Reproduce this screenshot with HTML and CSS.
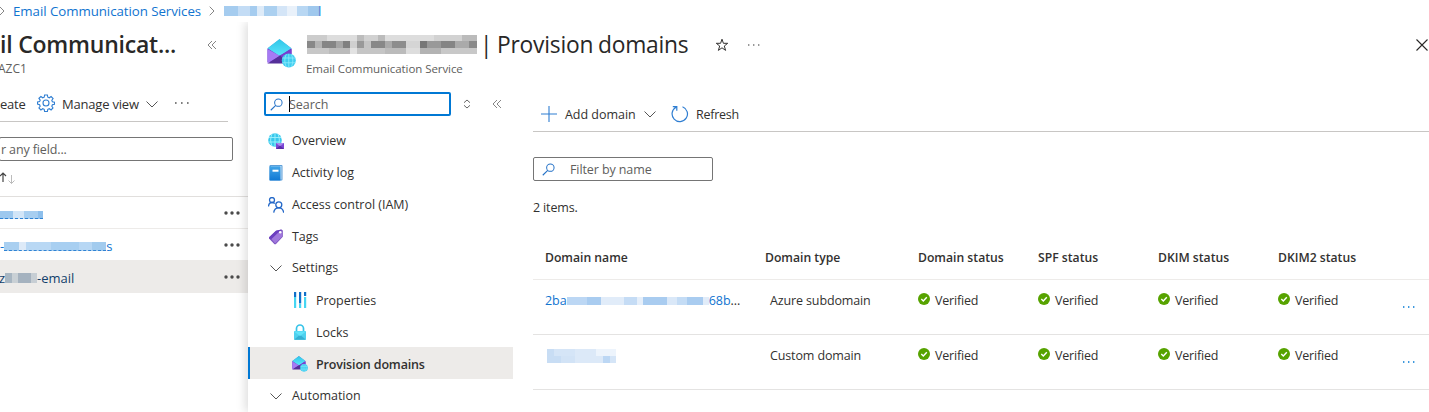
FILE: index.html
```html
<!DOCTYPE html>
<html lang="en">
<head>
<meta charset="utf-8">
<title>Provision domains</title>
<link rel="stylesheet" href="styles.css">
</head>
<body>
<svg class="defs" width="0" height="0">
  <defs>
    <linearGradient id="gc" x1="0" y1="0" x2="0" y2="1"><stop offset="0" stop-color="#2fc6e8"/><stop offset="1" stop-color="#5ce4fb"/></linearGradient>
    <linearGradient id="gb" x1="0" y1="0" x2="0" y2="1"><stop offset="0" stop-color="#42a5e8"/><stop offset="1" stop-color="#0f78d4"/></linearGradient>
    <symbol id="mail" viewBox="1 1 29 29">
      <path d="M1.500 10.500 13.500 1.500 25.500 10.500v13.500h-24z" fill="#6b36c4"/>
      <path d="M13.500 1 25.500 10.200 13.500 18 1.500 10.200z" fill="url(#gc)"/>
      <path d="M1.500 11 14 18 1.500 25.500z" fill="#a67af4"/>
      <path d="M25.500 11 13 18l12.500 6z" fill="#7a3fd0"/>
      <path d="M1.500 25.500l12.500-8 9 8z" fill="#552f99"/>
      <circle cx="22.800" cy="22.500" r="7" fill="#3fcdf0"/>
      <path d="M16.300 20h13M16.300 24.800h13M22.800 16v13M20.300 16.300c-2 4-2 8.500 0 12.500M25.300 16.300c2 4 2 8.500 0 12.500" fill="none" stroke="#91ecfd" stroke-width=".8"/>
    </symbol>
    <symbol id="chev" viewBox="0 0 12 8"><path d="M.5 1.500 6 7l5.500-5.500" fill="none" stroke="currentColor" stroke-width="1"/></symbol>
    <symbol id="collapse" viewBox="0 0 10 10"><path d="M5 1 1 5l4 4M9 1 5 5l4 4" fill="none" stroke="currentColor" stroke-width=".8"/></symbol>
    <symbol id="lens" viewBox="0 0 14 14"><circle cx="9" cy="5" r="4" fill="none" stroke="currentColor" stroke-width="1.100"/><path d="M6.200 7.900.8 13.200" stroke="currentColor" stroke-width="1.200"/></symbol>
    <symbol id="ok" viewBox="0 0 12 12"><circle cx="6" cy="6" r="6" fill="#57a300"/><path d="M3.300 6.100 5.300 8l3.500-3.800" fill="none" stroke="#fff" stroke-width="1.400"/></symbol>
    <symbol id="dots" viewBox="0 0 16 4"><circle cx="2" cy="2" r="1.700" fill="currentColor"/><circle cx="8" cy="2" r="1.700" fill="currentColor"/><circle cx="14" cy="2" r="1.700" fill="currentColor"/></symbol>
    <symbol id="smalldots" viewBox="0 0 14 2"><path d="M1 .3h1.400v1.400H1zM6 .3h1.400v1.400H6zM11 .3h1.400v1.400H11z" fill="currentColor"/></symbol>
  </defs>
</svg>
<nav class="crumbs">
  <svg class="crumb-sep first" viewBox="0 0 6 10"><path d="M.7.7 5 5 .7 9.300"/></svg>
  <a>Email Communication Services</a>
  <svg class="crumb-sep" viewBox="0 0 6 10"><path d="M.7.7 5 5 .7 9.300"/></svg>
  <span class="mosaic m-crumb"></span><a class="crumb-tail">l</a>
</nav>
<div class="main">
  <aside class="list">
    <div class="list-head"><h2>il Communicat...</h2><svg class="collapse"><use href="#collapse"/></svg></div>
    <div class="tenant">AZC1</div>
    <div class="list-bar">
      <span class="create">eate</span>
      <svg class="gear" viewBox="0 0 18 18"><path d="M7.600 1h2.800l.4 2.200 1.500.6L14.100 2.500l2 2-1.300 1.800.6 1.500 2.100.4v2l-2.100.5-.6 1.500 1.200 1.800-1.900 2-1.800-1.300-1.500.6-.4 2.200H7.600l-.4-2.200-1.500-.6-1.800 1.300-2-2 1.300-1.800-.6-1.500L.5 10V8l2.100-.4.6-1.500-1.300-1.700 2-1.900 1.800 1.300 1.500-.6z"/><circle cx="9" cy="9" r="3"/></svg>
      <span class="manage">Manage view</span>
      <svg class="chev"><use href="#chev"/></svg>
      <svg class="bar-dots" viewBox="0 0 16 2"><path d="M1 .2h1.600v1.600H1zM7 .2h1.600v1.600H7zM13 .2h1.600v1.600H13z"/></svg>
    </div>
    <div class="any-field">r any field...</div>
    <div class="sorts"><svg viewBox="0 0 16 14"><path class="up" d="M3 11V2M0 5l3-3 3 3"/><path class="down" d="M11.500 4v8.500M8.500 9.500l3 3 3-3"/></svg></div>
    <div class="res"><span class="mosaic m-one"></span><svg class="dots"><use href="#dots"/></svg></div>
    <div class="res"><a>-</a><span class="mosaic m-two"></span><a>s</a><svg class="dots"><use href="#dots"/></svg></div>
    <div class="res current"><a class="z">z</a><span class="mosaic m-three"></span><a>-email</a><svg class="dots"><use href="#dots"/></svg></div>
  </aside>
  <section class="blade">
    <header class="head">
      <svg class="logo"><use href="#mail"/></svg>
      <div class="titles">
        <div class="title"><span class="mosaic m-title"></span><h1>| Provision domains</h1></div>
        <div class="kind">Email Communication Service</div>
      </div>
      <svg class="star" viewBox="0 0 14 14"><path d="M7 1.200 8.400 5.300h4.300L9.300 8l1.300 4.400L7 9.800l-3.600 2.600L4.700 8 1.300 5.300h4.300z"/></svg>
      <svg class="head-dots"><use href="#smalldots"/></svg>
      <svg class="close" viewBox="0 0 12 12"><path d="M.5.5l11 11M11.500.5.500 11.500"/></svg>
    </header>
    <div class="body">
      <nav class="menu">
        <div class="search-row">
          <div class="search"><svg class="lens"><use href="#lens"/></svg><i class="caret"></i><span>Search</span></div>
          <svg class="updown" viewBox="0 0 8 10"><path d="M1 3.700 4 1l3 2.700M1 6.300 4 9l3-2.700"/></svg>
          <svg class="collapse"><use href="#collapse"/></svg>
        </div>
        <div class="item"><svg class="ic" viewBox="0 0 16 16"><circle cx="7" cy="7" r="6.800" fill="#38c8ec"/><path d="M1 4.500h12M.5 9h12M7 .3v13M4 1c-1.800 4-1.800 8 0 12M10 1c1.800 4 1.800 8 0 12" fill="none" stroke="#a0f0fd" stroke-width=".9"/><path d="M8 10h8v6H8z" fill="#7b46d6"/><path d="M8 10h8l-4 3.500z" fill="#a88aec"/><path d="M8 16l4-3.500 4 3.500z" fill="#5b2ea6"/></svg><span>Overview</span></div>
        <div class="item"><svg class="ic" viewBox="0 0 16 16"><rect x="1.500" y="0" width="13" height="15.500" rx="1" fill="#5c9ed8"/><rect x="3" y="1" width="10.500" height="13.500" fill="#c8e2f6"/><rect x="1.500" y="1.200" width="11" height="14.300" rx=".6" fill="url(#gb)"/><rect x="4.500" y="4.700" width="6" height="2" fill="#fff"/></svg><span>Activity log</span></div>
        <div class="item"><svg class="ic people" viewBox="0 0 16 16"><circle cx="4" cy="3" r="2.500"/><path d="M.5 9.500c.2-2.700 1.500-4 3.500-4 1.300 0 2.200.4 2.800 1"/><circle cx="10.800" cy="7.800" r="3"/><path d="M5.700 15.700c.4-3.200 2.300-4.900 5.100-4.900s4.500 1.700 4.900 4.900"/></svg><span>Access control (IAM)</span></div>
        <div class="item"><svg class="ic" viewBox="0 0 16 16"><path d="M8 1.800 13.500.6l1.300 1v6.200L7.800 15.200H6.500L1 9.500V8.300z" fill="#7d55c2"/><path d="M8.500 3 14 2l.2 5.500-7 7L2.500 9z" fill="#a078dc"/><path d="M8 1.800 13.500.6 3 10.500 1 8.500z" fill="#6c3fc0"/><circle cx="12.200" cy="3.300" r="1.200" fill="#fff"/></svg><span>Tags</span></div>
        <div class="item group"><svg class="chev"><use href="#chev"/></svg><span>Settings</span></div>
        <div class="item sub"><svg class="ic" viewBox="0 0 16 16"><path d="M2 0h2.200v5H2zM7 0h2.200v11.500H7zM12 0h2.200v4H12z" fill="#0f6fc9"/><path d="M2 5h2.200v11H2zM7 12h2.200v4H7zM12 5h2.200v11H12z" fill="#45d6f2"/></svg><span>Properties</span></div>
        <div class="item sub"><svg class="ic" viewBox="0 0 16 16"><path d="M4.500 8V4.500a3.500 3.500 0 0 1 7 0V8" fill="none" stroke="#36c3e8" stroke-width="1.700"/><rect x="2" y="7" width="12" height="8.800" rx=".8" fill="#4fd0ee"/><path d="M2 15.800l6-5 6 5z" fill="#35afd2"/><path d="M2 7.500 8 12l6-4.500z" fill="#62e4fa"/></svg><span>Locks</span></div>
        <div class="item sub selected"><svg class="ic"><use href="#mail"/></svg><span>Provision domains</span></div>
        <div class="item last"><svg class="chev"><use href="#chev"/></svg><span>Automation</span></div>
      </nav>
      <main class="content">
        <div class="commands">
          <svg class="plus" viewBox="0 0 16 16"><path d="M8 0v16M0 8h16"/></svg>
          <span class="add">Add domain</span>
          <svg class="chev"><use href="#chev"/></svg>
          <svg class="refresh" viewBox="0 0 18 18"><path d="M11.500 1.700A7.700 7.700 0 1 1 5 2.200M1.800 1.700h4v4"/></svg>
          <span class="ref">Refresh</span>
        </div>
        <div class="filter"><svg class="lens"><use href="#lens"/></svg><span>Filter by name</span></div>
        <div class="count">2 items.</div>
        <div class="row th"><span>Domain name</span><span>Domain type</span><span>Domain status</span><span>SPF status</span><span>DKIM status</span><span>DKIM2 status</span></div>
        <div class="row">
          <span class="name"><a>2ba</a><i class="mosaic m-dom"></i><a>68b</a>...</span><span class="type">Azure subdomain</span>
          <span class="st"><svg><use href="#ok"/></svg><b>Verified</b></span><span class="st"><svg><use href="#ok"/></svg><b>Verified</b></span><span class="st"><svg><use href="#ok"/></svg><b>Verified</b></span><span class="st"><svg><use href="#ok"/></svg><b>Verified</b></span>
          <svg class="row-dots"><use href="#smalldots"/></svg>
        </div>
        <div class="row">
          <span class="name"><i class="mosaic m-custom"></i></span><span class="type">Custom domain</span>
          <span class="st"><svg><use href="#ok"/></svg><b>Verified</b></span><span class="st"><svg><use href="#ok"/></svg><b>Verified</b></span><span class="st"><svg><use href="#ok"/></svg><b>Verified</b></span><span class="st"><svg><use href="#ok"/></svg><b>Verified</b></span>
          <svg class="row-dots"><use href="#smalldots"/></svg>
        </div>
      </main>
    </div>
  </section>
</div>
</body>
</html>
```
FILE: styles.css
```css
* { box-sizing: border-box; }
body { margin: 0; width: 1429px; height: 412px; overflow: hidden; background: #fff; color: #323130; font: 12.5px/16px "Open Sans", "Noto Sans", sans-serif; letter-spacing: -.03px; display: flex; flex-direction: column; }
.defs { position: absolute; }
svg { flex: none; display: block; }
h1, h2 { margin: 0; white-space: nowrap; color: #292827; }
span, a { white-space: nowrap; }
a { color: #1074d0; }
.chev { width: 12px; height: 8px; color: #555; }
.collapse { width: 10px; height: 10px; color: #666; }
.mosaic { display: block; flex: none; background-repeat: no-repeat; }

.crumbs { height: 22px; flex: none; display: flex; align-items: center; font-size: 13.3px; letter-spacing: -.06px; }
.crumb-sep { width: 6px; height: 10px; margin: 0 8px 0 8px; fill: none; stroke: #777; stroke-width: .9; }
.crumb-sep.first { margin: 0 8px 0 -1px; }
.crumb-tail { margin-left: -1px; }
.m-crumb { width: 95px; height: 10px; margin-left: 1px; background: linear-gradient(90deg, #a5ccef 0 14px, #c3dcf5 14px 26px, #a5ccef 26px 33px, #deebf8 33px 40px, #abd0f0 40px 53px, #d4e5f7 53px 63px, #e9f1fa 63px 73px, #b8d7f3 73px 84px, #9fc8ed 84px); }

.main { flex: 1; display: flex; }
.list { width: 248px; flex: none; display: flex; flex-direction: column; }
.list-head { height: 45px; display: flex; align-items: center; justify-content: space-between; padding-right: 31px; }
.list-head h2 { font-size: 23px; font-weight: 600; line-height: 30px; letter-spacing: -.22px; margin-top: -1px; }
.tenant { margin: -6px 0 0 -2px; height: 16px; font-size: 12px; color: #605e5c; }
.list-bar { height: 45px; width: 228px; border-bottom: 1px solid #c8c6c4; display: flex; align-items: center; padding-top: 10px; }
.create { width: 37px; font-size: 13px; letter-spacing: -.2px; }
.gear { width: 18px; height: 18px; margin-top: -2px; fill: none; stroke: #2f7ed2; stroke-width: 1.1; }
.manage { margin-left: 7px; width: 84px; font-size: 13px; letter-spacing: -.2px; }
.bar-dots { width: 16px; height: 2px; margin: -2px 0 0 16px; fill: #555; }
.any-field { height: 24px; width: 234px; margin: 15px 0 0 -1px; border: 1px solid #757575; border-radius: 2px; padding: 4px 0 0 1px; line-height: 15px; letter-spacing: -.13px; color: #605e5c; }
.sorts { height: 36px; border-bottom: 1px solid #e1dfdd; padding-top: 10px; }
.sorts svg { width: 16px; height: 14px; fill: none; stroke: #444; stroke-width: 1.2; }
.sorts .down { stroke: #bbb; stroke-width: 1; }
.res { height: 32px; border-bottom: 1px solid #edebe9; display: flex; align-items: center; padding: 4px 8px 0 0; }
.res a { margin-top: -1px; font-size: 13px; }
.res .dots { width: 16px; height: 4px; margin: -4px 0 0 auto; color: #4a4a4a; }
.current { background: #edebe9; }
.current a { color: #123f6b; }
.current .z { margin-left: -1px; }
.m-one { width: 43px; height: 8px; background: linear-gradient(90deg, #9dc8ee 0 13px, #d2e5f7 13px 24px, #a7cef0 24px 38px, #8dbfec 38px); border-bottom: 1px dashed #2f83d4; }
.m-two { width: 102px; height: 9px; background: linear-gradient(90deg, #a9cff0 0 15px, #ddeaf8 15px 22px, #b9d8f4 22px 47px, #a8cff1 47px 75px, #b7d7f4 75px 88px, #a2cbee 88px); border-bottom: 1px dashed #2f83d4; }
.m-three { width: 32px; height: 10px; margin-top: -2px; background: linear-gradient(90deg, #a8b6c2 0 7px, #c9d0d5 7px 13px, #a5b2bf 13px 26px, #c7ced4 26px); }

.blade { flex: 1; min-width: 0; background: #fff; box-shadow: -3px 0 9px rgba(0,0,0,.13); clip-path: inset(0 0 0 -14px); display: flex; flex-direction: column; }
.head { height: 62px; display: flex; padding-left: 19px; flex: none; }
.logo { width: 29px; height: 29px; margin-top: 17px; }
.titles { margin-left: 10px; width: 409px; }
.title { height: 46px; padding-left: 1px; display: flex; align-items: center; }
.title h1 { font-size: 22.8px; font-weight: 400; margin-left: 3px; letter-spacing: -.22px; word-spacing: -1px; line-height: 30px; margin-top: -1px; }
.m-title { width: 170px; height: 19px; margin-top: -1px; background:
  linear-gradient(90deg, #ccc 0 20px, #ddd 20px 50px, #bcbcbc 50px 57px, #d1d1d1 57px 71px, #bbb 71px 78px, #ddd 78px 127px, #d2d2d2 127px 155px, #bbb 155px) 0 0 / 100% 6px,
  linear-gradient(90deg, #888 0 8px, #b3b3b3 8px 15px, #858585 15px 29px, #a5a5a5 29px 36px, #808080 36px 43px, #d0d0d0 43px 50px, #999 50px 57px, #c4c4c4 57px 64px, #888 64px 78px, #aaa 78px 85px, #8d8d8d 85px 99px, #d5d5d5 99px 113px, #777 113px 120px, #999 120px 134px, #858585 134px 148px, #aaa 148px 162px, #8a8a8a 162px) 0 6px / 100% 7px,
  linear-gradient(90deg, #c7c7c7 0 22px, #bbb 22px 43px, #e2e2e2 43px 50px, #c5c5c5 50px 78px, #bbb 78px 99px, #ddd 99px 113px, #b3b3b3 113px 134px, #c8c8c8 134px) 0 13px / 100% 6px;
  background-repeat: no-repeat; }
.kind { margin-top: -7px; font-size: 11.5px; letter-spacing: -.07px; color: #605e5c; }
.star { width: 14px; height: 14px; margin-top: 16px; fill: none; stroke: #323130; }
.head-dots { width: 14px; height: 2px; margin: 22px 0 0 18px; color: #777; }
.close { width: 12px; height: 12px; margin: 17px 1px 0 auto; fill: none; stroke: #292827; stroke-width: 1.1; }
.body { display: flex; flex: 1; }
.menu { width: 265px; flex: none; }
.search-row { height: 41px; padding: 8px 0 9px 16px; display: flex; align-items: center; }
.search { width: 187px; height: 24px; border: 2px solid #0078d4; border-radius: 2px; display: flex; align-items: center; padding-left: 4px; color: #605e5c; }
.search span { padding-top: 2px; }
.lens { width: 13px; height: 13px; color: #2572c7; }
.caret { width: 1px; height: 16px; background: #000; margin: 0 -1px 0 6px; }
.updown { width: 8px; height: 10px; margin: 0 21px 0 12px; fill: none; stroke: #666; }
.item { height: 32px; display: flex; align-items: center; padding-left: 20px; }
.item .ic { width: 16px; height: 16px; margin-right: 8px; }
.item .chev { margin: 0 10px 0 2px; }
.people { fill: none; stroke: #2468c8; stroke-width: 1.3; }
.group { height: 30px; }
.sub { padding: 3px 0 0 44px; }
.sub .ic { margin-top: -2px; }
.sub.selected { background: #edebe9; border-left: 2px solid #0078d4; padding-left: 42px; font-weight: 600; letter-spacing: -.15px; }
.last { padding-top: 2px; }
.content { flex: 1; padding-left: 20px; }
.commands { height: 48px; border-bottom: 1px solid #c8c6c4; display: flex; align-items: center; padding: 13px 0 0 8px; }
.plus { width: 16px; height: 16px; stroke: #2f7ed2; stroke-width: 1.1; }
.commands span { padding-top: 2px; }
.add { width: 79px; margin-left: 8px; }
.ref { letter-spacing: -.25px; }
.refresh { width: 18px; height: 18px; margin: 0 7px 0 15px; fill: none; stroke: #2f7ed2; stroke-width: 1.2; }
.filter { width: 180px; height: 24px; margin-top: 25px; border: 1px solid #757575; border-radius: 2px; display: flex; align-items: center; padding-left: 8px; color: #605e5c; }
.filter span { margin-left: 15px; padding-top: 2px; letter-spacing: -.1px; }
.count { margin-top: 19px; height: 16px; letter-spacing: -.15px; }
.row { height: 55px; border-bottom: 1px solid #e4e3e2; display: grid; grid-template-columns: 220px 153px 120px 120px 120px 124px 1fr; padding: 13px 0 0 12px; }
.row.th { height: 64px; font-weight: 600; font-size: 12.2px; letter-spacing: 0; padding-top: 34px; border-color: #edebe9; }
.name { display: flex; align-items: center; height: 16px; }
.type { padding-left: 5px; letter-spacing: -.13px; }
.st { display: flex; height: 16px; }
.st svg { width: 12px; height: 12px; }
.st b { font-weight: 400; margin-left: 5px; letter-spacing: -.2px; }
.row-dots { width: 14px; height: 2px; margin-top: 13px; color: #0078d4; }
.m-dom { width: 142px; height: 8px; background: linear-gradient(90deg, #bcd7f4 0 20px, #a9ccf0 20px 34px, #e1ecf9 34px 57px, #c5dcf5 57px 70px, #e6effa 70px 76px, #a9ccf0 76px 100px, #dae8f8 100px 110px, #c4dcf5 110px 120px, #a9ccf0 120px 136px, #e1ecf9 136px); }
.m-custom { width: 69px; height: 14px; margin-left: 2px; background: linear-gradient(90deg, #c8ddf4 0 7px, #d5e5f7 7px 28px, #dce9f8 28px 49px, #edf4fc 49px) 0 0 / 100% 7px, linear-gradient(90deg, #c8ddf4 0 14px, #d2e3f6 14px 28px, #dce9f8 28px 56px, #bcd7f4 56px 63px, #d5e5f7 63px) 0 7px / 100% 7px; background-repeat: no-repeat; }
```
